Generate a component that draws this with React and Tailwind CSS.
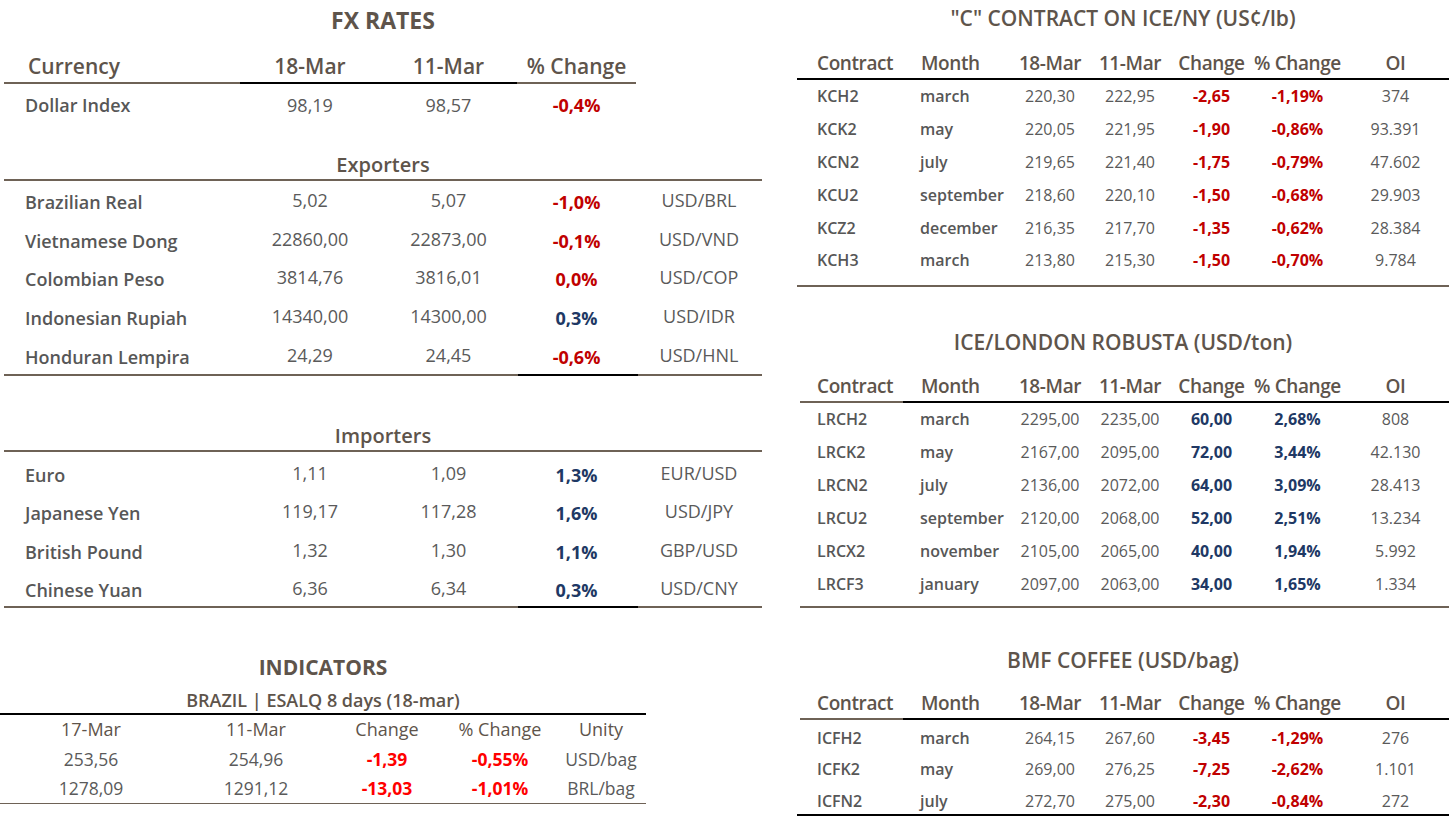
import React from 'react';

const RED = 'text-[#c00000]';
const BLUE = 'text-[#203864]';

const exporters = [
  { name: 'Brazilian Real', a: '5,02', b: '5,07', pct: '-1,0%', unit: 'USD/BRL', up: false },
  { name: 'Vietnamese Dong', a: '22860,00', b: '22873,00', pct: '-0,1%', unit: 'USD/VND', up: false },
  { name: 'Colombian Peso', a: '3814,76', b: '3816,01', pct: '0,0%', unit: 'USD/COP', up: false },
  { name: 'Indonesian Rupiah', a: '14340,00', b: '14300,00', pct: '0,3%', unit: 'USD/IDR', up: true },
  { name: 'Honduran Lempira', a: '24,29', b: '24,45', pct: '-0,6%', unit: 'USD/HNL', up: false }
];

const importers = [
  { name: 'Euro', a: '1,11', b: '1,09', pct: '1,3%', unit: 'EUR/USD', up: true },
  { name: 'Japanese Yen', a: '119,17', b: '117,28', pct: '1,6%', unit: 'USD/JPY', up: true },
  { name: 'British Pound', a: '1,32', b: '1,30', pct: '1,1%', unit: 'GBP/USD', up: true },
  { name: 'Chinese Yuan', a: '6,36', b: '6,34', pct: '0,3%', unit: 'USD/CNY', up: true }
];

const iceNy = [
  ['KCH2', 'march', '220,30', '222,95', '-2,65', '-1,19%', '374'],
  ['KCK2', 'may', '220,05', '221,95', '-1,90', '-0,86%', '93.391'],
  ['KCN2', 'july', '219,65', '221,40', '-1,75', '-0,79%', '47.602'],
  ['KCU2', 'september', '218,60', '220,10', '-1,50', '-0,68%', '29.903'],
  ['KCZ2', 'december', '216,35', '217,70', '-1,35', '-0,62%', '28.384'],
  ['KCH3', 'march', '213,80', '215,30', '-1,50', '-0,70%', '9.784']
];

const london = [
  ['LRCH2', 'march', '2295,00', '2235,00', '60,00', '2,68%', '808'],
  ['LRCK2', 'may', '2167,00', '2095,00', '72,00', '3,44%', '42.130'],
  ['LRCN2', 'july', '2136,00', '2072,00', '64,00', '3,09%', '28.413'],
  ['LRCU2', 'september', '2120,00', '2068,00', '52,00', '2,51%', '13.234'],
  ['LRCX2', 'november', '2105,00', '2065,00', '40,00', '1,94%', '5.992'],
  ['LRCF3', 'january', '2097,00', '2063,00', '34,00', '1,65%', '1.334']
];

const bmf = [
  ['ICFH2', 'march', '264,15', '267,60', '-3,45', '-1,29%', '276'],
  ['ICFK2', 'may', '269,00', '276,25', '-7,25', '-2,62%', '1.101'],
  ['ICFN2', 'july', '272,70', '275,00', '-2,30', '-0,84%', '272']
];

function FxRow({ row, h }) {
  const tone = row.up ? BLUE : RED;
  return (
    <div className={`flex items-center pt-[5px] text-[18px] ${h}`}>
      <div className="w-[236px] pl-[21px] font-semibold text-[#575757]">{row.name}</div>
      <div className="w-[140px] -translate-y-[2px] text-center text-[#5a5a5a]">{row.a}</div>
      <div className="w-[137px] -translate-y-[2px] text-center text-[#5a5a5a]">{row.b}</div>
      <div className={`w-[119px] text-center font-bold ${tone}`}>{row.pct}</div>
      <div className="w-[126px] -translate-y-[2px] text-center text-[#5a5a5a]">{row.unit}</div>
    </div>
  );
}

function SplitLine() {
  return (
    <div className="flex h-[2px]">
      <div className="w-[514px] bg-[#6e6256]" />
      <div className="w-[120px] bg-black" />
      <div className="flex-1 bg-[#6e6256]" />
    </div>
  );
}

function FutRow({ r, up, h }) {
  const tone = up ? BLUE : RED;
  return (
    <div className={`flex items-center text-[16px] ${h}`}>
      <div className="w-[108px] pl-[20px] font-semibold text-[#575757]">{r[0]}</div>
      <div className="w-[105px] pl-[15px] font-semibold text-[#575757]">{r[1]}</div>
      <div className="w-[80px] text-center text-[#5a5a5a]">{r[2]}</div>
      <div className="w-[80px] text-center text-[#5a5a5a]">{r[3]}</div>
      <div className={`w-[83px] text-center font-bold ${tone}`}>{r[4]}</div>
      <div className={`w-[89px] text-center font-bold ${tone}`}>{r[5]}</div>
      <div className="w-[107px] text-center text-[#5a5a5a]">{r[6]}</div>
    </div>
  );
}

function FutHeader({ pt }) {
  return (
    <div className={`flex whitespace-nowrap text-[19px] font-semibold leading-[24px] tracking-[-0.4px] text-[#5e544b] ${pt}`}>
      <div className="w-[108px] pl-[20px]">Contract</div>
      <div className="w-[105px] pl-[16px]">Month</div>
      <div className="w-[80px] text-center">18-Mar</div>
      <div className="w-[80px] text-center">11-Mar</div>
      <div className="w-[83px] text-center">Change</div>
      <div className="flex w-[89px] justify-center">% Change</div>
      <div className="w-[107px] text-center">OI</div>
    </div>
  );
}

export default function App() {
  return (
    <div className="flex h-[819px] w-[1449px] overflow-hidden bg-white font-['Open_Sans',sans-serif]">
      {/* left column */}
      <div className="w-[797px] shrink-0">
        <div className="ml-[4px] w-[758px]">
          <div className="h-[40px] text-center text-[23px] font-bold leading-[40px] text-[#5e544b]">FX RATES</div>
          <div className="flex h-[42px] pt-[14px] text-[21px] font-semibold leading-[24px] text-[#5e544b]">
            <div className="w-[236px] pl-[24px]">Currency</div>
            <div className="w-[140px] text-center">18-Mar</div>
            <div className="w-[137px] text-center">11-Mar</div>
            <div className="w-[119px] text-center">% Change</div>
          </div>
          <div className="flex h-[2px] w-[632px]">
            <div className="w-[236px] bg-[#6e6256]" />
            <div className="w-[277px] bg-black" />
            <div className="flex-1 bg-[#6e6256]" />
          </div>
          <div className="flex h-[42px] items-center text-[18px]">
            <div className="w-[236px] pl-[21px] font-semibold text-[#575757]">Dollar Index</div>
            <div className="w-[140px] text-center text-[#5a5a5a]">98,19</div>
            <div className="w-[137px] text-center text-[#5a5a5a]">98,57</div>
            <div className={`w-[119px] text-center font-bold ${RED}`}>-0,4%</div>
          </div>

          <div className="h-[53px] pt-[27px] text-center text-[20px] font-semibold leading-[24px] text-[#5e544b]">Exporters</div>
          <div className="h-[2px] bg-[#6e6256]" />
          {exporters.map((r) => (
            <FxRow key={r.name} row={r} h="h-[38.6px]" />
          ))}
          <SplitLine />

          <div className="h-[74px] pt-[48px] text-center text-[20px] font-semibold leading-[24px] text-[#5e544b]">Importers</div>
          <div className="h-[2px] bg-[#6e6256]" />
          {importers.map((r) => (
            <FxRow key={r.name} row={r} h="h-[38.5px] pt-[8px]" />
          ))}
          <SplitLine />
        </div>

        {/* indicators */}
        <div className="mt-[45px] w-[646px]">
          <div className="h-[28px] text-center text-[21px] font-bold leading-[28px] text-[#5e544b]">INDICATORS</div>
          <div className="h-[32px] pt-[8px] text-center text-[18px] font-semibold leading-[22px] text-[#5e544b]">
            BRAZIL | ESALQ 8 days (18-mar)
          </div>
          <div className="h-[2px] bg-black" />
          <div className="flex h-[30px] items-center text-[18px] text-[#5e544b]">
            <div className="w-[182px] text-center">17-Mar</div>
            <div className="w-[148px] text-center">11-Mar</div>
            <div className="w-[114px] text-center">Change</div>
            <div className="w-[112px] text-center">% Change</div>
            <div className="w-[90px] text-center">Unity</div>
          </div>
          {[
            ['253,56', '254,96', '-1,39', '-0,55%', 'USD/bag'],
            ['1278,09', '1291,12', '-13,03', '-1,01%', 'BRL/bag']
          ].map((r) => (
            <div key={r[0]} className="flex h-[29px] items-center text-[17.5px] text-[#5a5a5a]">
              <div className="w-[182px] text-center">{r[0]}</div>
              <div className="w-[148px] text-center">{r[1]}</div>
              <div className="w-[114px] text-center font-bold text-[#ff0000]">{r[2]}</div>
              <div className="w-[112px] text-center font-bold text-[#ff0000]">{r[3]}</div>
              <div className="w-[90px] text-center">{r[4]}</div>
            </div>
          ))}
          <div className="h-[1px] bg-[#6e6256]" />
        </div>
      </div>

      {/* right column */}
      <div className="w-[652px] shrink-0">
        <div className="h-[36px] text-center text-[21px] font-semibold leading-[36px] text-[#5e544b]">
          "C" CONTRACT ON ICE/NY (US¢/lb)
        </div>
        <div className="h-[42px]">
          <FutHeader pt="pt-[15px]" />
        </div>
        <div className="h-[2px] bg-black" />
        {iceNy.map((r) => (
          <FutRow key={r[0]} r={r} up={false} h="h-[32.8px]" />
        ))}
        <div className="h-[8px]" />
        <div className="h-[2px] bg-[#6e6256]" />

        <div className="mt-[41px] h-[28px] text-center text-[21px] font-semibold leading-[28px] text-[#5e544b]">
          ICE/LONDON ROBUSTA (USD/ton)
        </div>
        <div className="h-[45px]">
          <FutHeader pt="pt-[18px]" />
        </div>
        <div className="ml-[3px] flex h-[2px]">
          <div className="w-[103px] bg-[#6e6256]" />
          <div className="flex-1 bg-black" />
        </div>
        {london.map((r) => (
          <FutRow key={r[0]} r={r} up h="h-[33px]" />
        ))}
        <div className="h-[5px]" />
        <div className="ml-[3px] h-[2px] bg-[#6e6256]" />

        <div className="mt-[38px] h-[28px] text-center text-[21px] font-semibold leading-[28px] text-[#5e544b]">
          BMF COFFEE (USD/bag)
        </div>
        <div className="h-[44px]">
          <FutHeader pt="pt-[17px]" />
        </div>
        <div className="ml-[3px] flex h-[2px]">
          <div className="w-[103px] bg-[#6e6256]" />
          <div className="flex-1 bg-black" />
        </div>
        {bmf.map((r) => (
          <FutRow key={r[0]} r={r} up={false} h="h-[31.5px] pt-[4px]" />
        ))}
        <div className="h-[2px] bg-black" />
      </div>
    </div>
  );
}
